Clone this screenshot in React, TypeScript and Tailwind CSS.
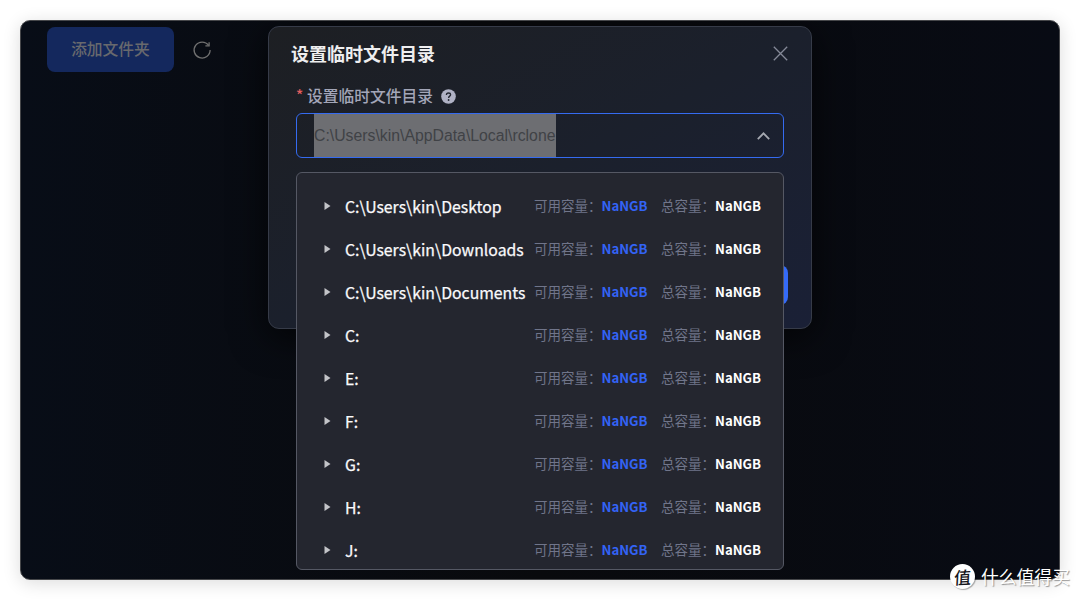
import React, { useState } from "react";

const drives = [
  "C:\\Users\\kin\\Desktop",
  "C:\\Users\\kin\\Downloads",
  "C:\\Users\\kin\\Documents",
  "C:",
  "E:",
  "F:",
  "G:",
  "H:",
  "J:",
];

interface DriveRowProps {
  path: string;
  free: string;
  total: string;
}

const DriveRow = ({ path, free, total }: DriveRowProps) => {
  return (
    <div className="flex h-[43px] items-center">
      <svg className="mb-[4px] ml-[27px] h-2 w-[7px]" viewBox="0 0 7 8">
        <path d="M0.5 0L6.5 4L0.5 8Z" fill="#c3c4c8" />
      </svg>
      <div className="ml-[14px] w-[189px] whitespace-nowrap pb-[2px] text-[15.8px] leading-6 text-[#fafafc] [-webkit-text-stroke:0.25px_#fafafc]">
        {path}
      </div>
      <div className="flex whitespace-nowrap pb-[4px] text-[13.5px] leading-5 text-[#70758a]">
        <div className="-mt-px w-[67.5px]">可用容量：</div>
        <div className="w-[59.5px] text-[13.2px] font-bold text-[#3363f5]">
          {free}
        </div>
        <div className="-mt-px w-[54px]">总容量：</div>
        <div className="text-[13.2px] font-bold text-white">{total}</div>
      </div>
    </div>
  );
};

const Toolbar = () => {
  return (
    <div className="-ml-px flex items-center pl-[27px] pt-[6px]">
      <button className="h-[45px] w-[127px] rounded-lg bg-[#14285d] pb-px text-[15.75px] font-medium text-[#68696d]">
        添加文件夹
      </button>
      <svg
        className="ml-[18px] h-5 w-5"
        viewBox="0 0 20 20"
        fill="none"
        stroke="#707070"
        strokeWidth="1.3"
      >
        <path d="M18.1 10A8 8 0 1 1 16.6 5.4" />
        <path d="M13.4 5.9H17.1V2.2" />
      </svg>
    </div>
  );
};

const TempDirModal = () => {
  const [open, setOpen] = useState(true);

  return (
    <div className="absolute left-[247px] top-[5px] h-[303px] w-[544px] rounded-[11px] border border-[#363b48] bg-linear-to-br from-[#1d1f23] via-[#1b202c] to-[#1a2036] px-[27px] shadow-[0_8px_36px_rgba(0,0,0,0.7)]">
      <div className="-ml-[5px] flex h-[53px] items-center justify-between">
        <div className="text-[18px] font-bold text-[#eeeeef]">
          设置临时文件目录
        </div>
        <svg
          className="mr-[-4px] h-[15px] w-[15px]"
          viewBox="0 0 15 15"
          stroke="#858998"
          strokeWidth="1.3"
        >
          <path d="M0.8 0.8L14.2 14.2M14.2 0.8L0.8 14.2" />
        </svg>
      </div>
      <div className="mb-[2px] flex h-[31px] items-center text-[15.75px] font-medium text-[#a3a6b8]">
        <span className="w-[11px] text-[15px] text-[#e45d5d]">*</span>
        <span className="whitespace-nowrap">设置临时文件目录</span>
        <svg
          className="ml-[8px] mt-px h-[15px] w-[15px]"
          viewBox="0 0 15 15"
        >
          <circle cx="7.5" cy="7.5" r="7.3" fill="#b0b2c5" />
          <path
            d="M5.4 6C5.4 4.7 6.3 4 7.5 4C8.7 4 9.6 4.7 9.6 5.8C9.6 7.1 7.6 7.2 7.6 8.9"
            fill="none"
            stroke="#242832"
            strokeWidth="1.3"
          />
          <circle cx="7.6" cy="11" r="0.9" fill="#242832" />
        </svg>
      </div>
      <div
        onClick={() => setOpen((prev) => !prev)}
        className="flex h-[45px] w-[488px] items-center justify-between rounded-md border border-[#356bf0] pl-[17px] pr-[13px]"
      >
        <div className="flex h-full w-[242px] items-center whitespace-nowrap bg-[#6d6e72] pt-px font-['Liberation_Sans',Arial,sans-serif] text-[15.8px] text-[#404246]">
          C:\Users\kin\AppData\Local\rclone
        </div>
        <svg
          className="h-[8px] w-[13px]"
          viewBox="0 0 13 8"
          fill="none"
          stroke="#a5a8b0"
          strokeWidth="1.8"
        >
          <path d="M0.8 7.2L6.5 1.4L12.2 7.2" />
        </svg>
      </div>
      <div className="-mr-[4px] mt-[107px] flex justify-end">
        <button className="h-[40px] w-[90px] rounded-lg bg-[#356bf8] text-white" />
      </div>
      {open && (
        <div className="absolute left-[27px] top-[145px] h-[398px] w-[488px] overflow-hidden rounded-md border border-[#555864] bg-[#24262f] pt-[13px]">
          {drives.map((path) => (
            <DriveRow key={path} path={path} free="NaNGB" total="NaNGB" />
          ))}
        </div>
      )}
    </div>
  );
};

const Watermark = () => {
  return (
    <div className="absolute left-[950px] top-[564px] flex items-center whitespace-nowrap text-white">
      <div className="flex h-[25px] w-[25px] items-center justify-center rounded-full bg-white text-[17px] font-medium leading-none text-[#17181d] shadow-[1px_1px_1px_rgba(0,0,0,0.3)]">
        <span className="-skew-x-6 -rotate-3 pb-px">值</span>
      </div>
      <div className="ml-[6px] pb-px text-[17.8px] leading-6 [text-shadow:1px_1px_1px_rgba(0,0,0,0.4)]">
        什么值得买
      </div>
    </div>
  );
};

const App = () => {
  return (
    <div className="relative h-[600px] w-[1080px] overflow-hidden bg-white p-[20px] font-['Noto_Sans_CJK_SC','Noto_Sans',sans-serif]">
      <div className="relative h-[560px] w-[1040px] overflow-hidden rounded-[10px] border border-[#46474a] bg-linear-to-r from-[#080d17] via-[#090a0d] to-[#080b14] shadow-[0_3px_18px_rgba(0,0,0,0.14)]">
        <Toolbar />
        <TempDirModal />
      </div>
      <Watermark />
    </div>
  );
};

export default App;
